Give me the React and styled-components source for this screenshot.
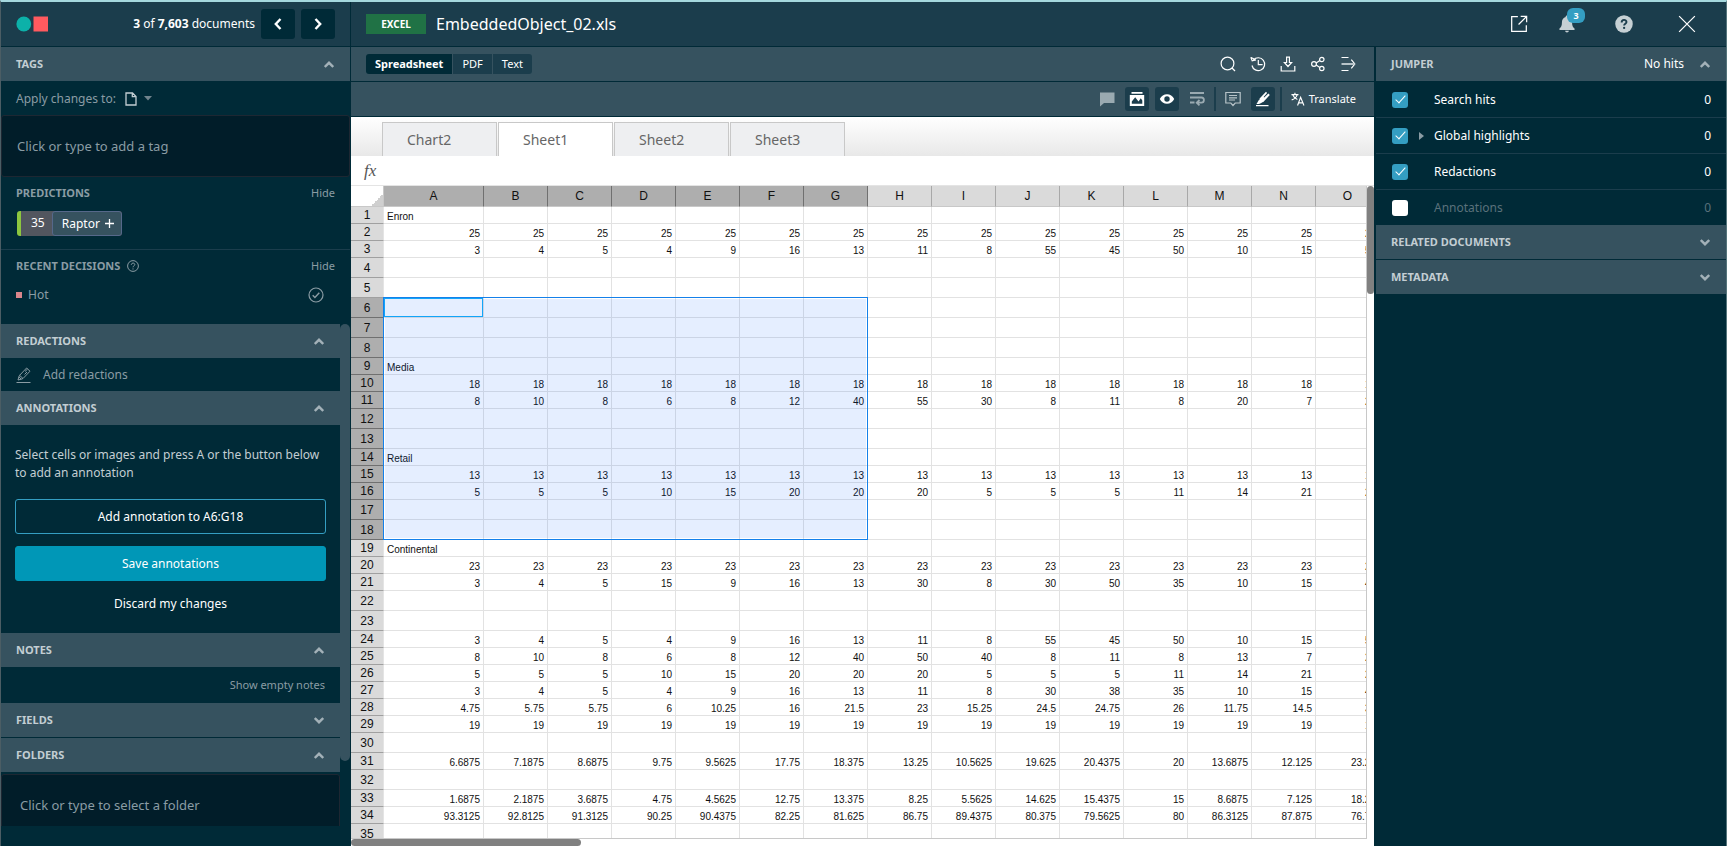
import React, { useState } from 'react';
import styled, { createGlobalStyle } from 'styled-components';

const colors = {
  dark: '#002a37',
  darker: '#011d29',
  header: '#1b3d4c',
  bar: '#36525f',
  muted: '#8a9ca4',
  label: '#c3ced3',
  blue: '#349ec2',
};

const GlobalStyle = createGlobalStyle`
  *, *::before, *::after {
    box-sizing: border-box;
  }
  body {
    margin: 0;
    font-family: 'Noto Sans', 'Open Sans', sans-serif;
    font-size: 12px;
    line-height: 18px;
    color: #fff;
    background: ${colors.dark};
  }
  button, input {
    font: inherit;
    color: inherit;
  }
  svg {
    display: block;
    flex: none;
  }
`;

const Page = styled.div`
  display: flex;
  height: 100vh;
  overflow: hidden;
  border-top: 2px solid #a5d8de;
  border-left: 1px solid #4b5d64;
  border-right: 1px solid #55757c;
  background: ${colors.dark};
`;

/* ---------- shared parts ---------- */

const PlainButton = styled.button`
  display: flex;
  align-items: center;
  justify-content: center;
  padding: 0;
  border: 0;
  background: none;
  color: ${(p) => p.$color || '#fff'};
  cursor: pointer;
`;

const SectionBar = styled.button`
  display: flex;
  align-items: center;
  gap: 16px;
  width: 100%;
  height: ${(p) => (p.$divided ? '35px' : '34px')};
  padding: 0 16px 0 15px;
  border: 0;
  border-bottom: ${(p) => (p.$divided ? `1px solid ${colors.dark}` : '0')};
  background: ${colors.bar};
  color: ${colors.label};
  text-align: left;
  cursor: pointer;
  flex: none;
`;

const SectionTitle = styled.span`
  flex: 1;
  font-size: 11px;
  font-weight: 700;
`;

const SectionNote = styled.span`
  color: #fff;
`;

/* ---------- left panel ---------- */

const LeftPanel = styled.aside`
  display: flex;
  flex-direction: column;
  width: 350px;
  flex: none;
  border-right: 1px solid ${colors.dark};
`;

const LeftHeader = styled.header`
  display: flex;
  align-items: center;
  gap: 6px;
  height: 45px;
  padding: 0 15px;
  background: ${colors.header};
  border-bottom: 1px solid ${colors.dark};
  flex: none;
`;

const Position = styled.span`
  margin-left: auto;
`;

const NavButton = styled(PlainButton)`
  width: 34px;
  height: 30px;
  border-radius: 3px;
  background: ${colors.dark};
`;

const ApplyRow = styled.div`
  display: flex;
  align-items: center;
  gap: 9px;
  height: 33px;
  padding: 0 15px;
  color: ${colors.muted};
  flex: none;
`;

const ApplyButton = styled(PlainButton)`
  gap: 7px;
`;

const PickerInput = styled.input`
  display: block;
  width: 100%;
  height: 62px;
  padding: 0 ${(p) => (p.$indented ? '18px' : '15px')};
  border: 1px solid #1d2732;
  border-radius: 3px;
  background: ${colors.darker};
  font-size: 13px;
  flex: none;

  &::placeholder {
    color: ${colors.muted};
    opacity: 1;
  }
`;

const SubSection = styled.section`
  padding: 7px 15px 0;
  height: ${(p) => p.$height};
  border-bottom: ${(p) => (p.$line ? `1px solid ${colors.header}` : '0')};
  flex: none;
`;

const SubHeader = styled.div`
  display: flex;
  align-items: center;
  gap: 7px;
  color: ${colors.muted};
`;

const SubTitle = styled.h2`
  margin: 0;
  font-size: 11px;
  line-height: 18px;
  font-weight: 700;
`;

const TextButton = styled(PlainButton)`
  margin-left: auto;
  font-size: 11px;
`;

const Prediction = styled.div`
  display: inline-flex;
  margin: 9px 0 0 1px;
  height: 25px;
  border-left: 4px solid #8cc63f;
  border-radius: 3px;
  overflow: hidden;
  background: #52565f;
`;

const Score = styled.span`
  padding: 3px 7px 0 10px;
`;

const PredictionTag = styled(PlainButton)`
  gap: 5px;
  padding: 0 7px 0 9px;
  border: 1px solid #56688a;
  border-radius: 3px;
  background: ${colors.bar};
`;

const Decision = styled.div`
  display: flex;
  align-items: center;
  gap: 6px;
  padding: 11px 11px 0 0;
  color: ${colors.muted};
`;

const Swatch = styled.span`
  width: 6px;
  height: 6px;
  background: #d9868c;
`;

const DecisionName = styled.span`
  flex: 1;
`;

const ScrollArea = styled.div`
  display: flex;
  flex: 1;
  min-height: 0;
  margin-bottom: 20px;
`;

const ScrollContent = styled.div`
  display: flex;
  flex-direction: column;
  flex: 1;
  min-width: 0;
  overflow: hidden;
`;

const ScrollTrack = styled.div`
  width: 10px;
  flex: none;
`;

const ScrollThumb = styled.div`
  height: 87%;
  border-radius: 5px;
  background: ${colors.bar};
`;

const AddRedactions = styled(PlainButton)`
  justify-content: flex-start;
  gap: 11px;
  height: 33px;
  padding: 0 15px;
  flex: none;
`;

const AnnotationBody = styled.div`
  display: flex;
  flex-direction: column;
  height: 208px;
  padding: 21px 14px 0;
  flex: none;
`;

const HelpText = styled.p`
  margin: 0 0 17px;
  color: ${colors.label};
`;

const WideButton = styled.button`
  height: 36px;
  margin-bottom: ${(p) => (p.$primary ? '5px' : '12px')};
  border-radius: 3px;
  border: 1px solid ${(p) => (p.$primary ? '#0097b7' : p.$outline ? colors.blue : 'transparent')};
  background: ${(p) => (p.$primary ? '#0097b7' : 'transparent')};
  cursor: pointer;
`;

const NotesRow = styled.div`
  display: flex;
  align-items: center;
  height: 36px;
  padding: 0 15px;
  flex: none;
`;

const FolderSlot = styled.div`
  padding-top: 2px;
  flex: none;
`;

/* ---------- main area ---------- */

const Main = styled.div`
  display: flex;
  flex-direction: column;
  flex: 1;
  min-width: 0;
`;

const TopBar = styled.header`
  display: flex;
  align-items: center;
  gap: 10px;
  height: 45px;
  padding: 0 6px 0 15px;
  background: ${colors.header};
  border-bottom: 1px solid ${colors.dark};
  flex: none;
`;

const FileType = styled.span`
  width: 60px;
  height: 20px;
  line-height: 20px;
  background: #207245;
  font-size: 10px;
  font-weight: 700;
  text-align: center;
`;

const FileName = styled.h1`
  flex: 1;
  margin: 0;
  font-size: 16px;
  line-height: 24px;
  font-weight: 400;
`;

const TopActions = styled.div`
  display: grid;
  grid-template-columns: 42px 54px 60px 66px;
  align-items: center;
`;

const BellButton = styled(PlainButton)`
  position: relative;
`;

const Badge = styled.span`
  position: absolute;
  left: 50%;
  top: -7px;
  width: 18px;
  height: 15px;
  border-radius: 6px;
  background: ${colors.blue};
  color: #fff;
  font-size: 9px;
  line-height: 15px;
  font-weight: 700;
`;

const Body = styled.div`
  display: flex;
  flex: 1;
  min-height: 0;
`;

const Viewer = styled.main`
  display: flex;
  flex-direction: column;
  flex: 1;
  min-width: 0;
  border-right: 2px solid ${colors.dark};
`;

const Toolbar = styled.div`
  display: flex;
  align-items: center;
  gap: ${(p) => p.$gap};
  height: 35px;
  padding: 0 18px 0 15px;
  background: ${colors.bar};
  border-bottom: 1px solid ${colors.dark};
  flex: none;
`;

const Segments = styled.div`
  display: flex;
  gap: 1px;
  margin-right: auto;
  border-radius: 3px;
  overflow: hidden;
`;

const Segment = styled(PlainButton)`
  height: 20px;
  padding: 0 9px;
  background: ${(p) => (p.$active ? colors.dark : colors.header)};
  font-size: 11px;
  font-weight: ${(p) => (p.$active ? 700 : 400)};
`;

const ToolButton = styled(PlainButton)`
  width: 24px;
  height: 24px;
  border-radius: 3px;
  background: ${(p) => (p.$active ? colors.header : 'transparent')};
`;

const ToolDivider = styled.span`
  width: 2px;
  height: 24px;
  margin: 0 -1px;
  background: ${colors.header};
`;

const TranslateButton = styled(PlainButton)`
  gap: 4px;
  margin-left: 4px;
  font-size: 11px;
`;

const Spacer = styled.span`
  flex: 1;
`;

/* ---------- spreadsheet ---------- */

const SheetArea = styled.div`
  display: flex;
  flex-direction: column;
  flex: 1;
  min-height: 0;
  background: #fff;
`;

const SheetTabs = styled.div`
  display: flex;
  align-items: flex-end;
  gap: 1px;
  height: 39px;
  padding-left: 31px;
  background: linear-gradient(#fff, #e8e8e8);
  flex: none;
`;

const SheetTab = styled.button`
  width: 115px;
  height: 34px;
  padding: 0 0 0 24px;
  border: 1px solid #c8c8c8;
  border-bottom: 0;
  background: ${(p) => (p.$active ? '#fff' : '#eeeff1')};
  color: #666;
  font-size: 14px;
  text-align: left;
`;

const FormulaBar = styled.label`
  display: flex;
  align-items: center;
  height: 30px;
  padding-left: 13px;
  border-bottom: 1px solid #e4e4e4;
  color: #555;
  font-family: 'Liberation Serif', serif;
  font-size: 17px;
  font-style: italic;
  flex: none;
`;

const FormulaInput = styled.input`
  flex: 1;
  height: 22px;
  margin-left: 8px;
  border: 0;
  outline: 0;
  background: transparent;
  color: #222;
`;

const GridRow = styled.div`
  display: flex;
  flex: 1;
  min-height: 0;
`;

const GridView = styled.div`
  position: relative;
  flex: 1;
  min-width: 0;
  overflow: hidden;
  border-right: 1px solid #c8c8c8;
  border-bottom: 1px solid #c8c8c8;
`;

const VScroll = styled.div`
  width: 7px;
  flex: none;
`;

const VThumb = styled.div`
  height: 108px;
  border-radius: 4px;
  background: #808080;
`;

const HScroll = styled.div`
  height: 7px;
  flex: none;
`;

const HThumb = styled.div`
  width: 230px;
  height: 7px;
  border-radius: 4px;
  background: #808080;
`;

const Grid = styled.table`
  table-layout: fixed;
  width: 1029px;
  border-collapse: separate;
  border-spacing: 0;
  font-family: 'Liberation Sans', Arial, sans-serif;
  color: #111;

  th, td {
    padding: 0;
    overflow: hidden;
    white-space: nowrap;
  }
`;

const GutterCol = styled.col`
  width: 33px;
`;

const FirstCol = styled.col`
  width: 100px;
`;

const DataCol = styled.col`
  width: 64px;
`;

const Corner = styled.th`
  height: 21px;
  border-right: 1px solid #c8c8c8;
  border-bottom: 1px solid #c8c8c8;
  background: linear-gradient(135deg, transparent 50%, #cfcfcf 50%) right bottom / 12px 12px no-repeat;
`;

const ColumnHead = styled.th`
  height: 21px;
  border-right: 1px solid ${(p) => (p.$selected ? '#707070' : '#a8a8a8')};
  border-bottom: 1px solid #c8c8c8;
  background: ${(p) => (p.$selected ? '#aeaeae' : '#dadada')};
  font-size: 12px;
  line-height: 18px;
  font-weight: 400;
`;

const RowHead = styled.th`
  border-right: 1px solid #e4e4e4;
  border-bottom: 1px solid ${(p) => (p.$selected ? '#707070' : '#a0a0a0')};
  background: ${(p) => (p.$selected ? '#aeaeae' : '#dadada')};
  font-size: 12px;
  line-height: 16px;
  font-weight: 400;
`;

const Cell = styled.td`
  height: ${(p) => p.$height}px;
  border-right: 1px solid #e2e2e2;
  border-bottom: 1px solid #e2e2e2;
  font-size: 10px;
  line-height: 12px;
  vertical-align: bottom;
  text-align: ${(p) => (p.$text ? 'left' : 'right')};

  && {
    padding: 0 3px;
  }
`;

const Selection = styled.div`
  position: absolute;
  padding: 1px;
  border: 1px solid #1480ea;
  background: rgba(0, 90, 255, 0.1) content-box;
  pointer-events: none;
`;

const ActiveCell = styled.div`
  position: absolute;
  left: 0;
  top: 0;
  width: 99px;
  height: 19px;
  border: 1px solid #12a5f8;
`;

/* ---------- right panel ---------- */

const RightPanel = styled.aside`
  width: 350px;
  flex: none;
`;

const HitRow = styled.div`
  display: flex;
  align-items: center;
  height: 36px;
  padding: 0 15px;
  border-bottom: 1px solid ${colors.header};
  color: ${(p) => (p.$dim ? '#5a717b' : '#fff')};

  &:last-of-type {
    height: 35px;
    border-bottom: 0;
  }
`;

const HitLabel = styled.label`
  display: flex;
  align-items: center;
  flex: 1;
`;

const CheckBox = styled.input`
  appearance: none;
  display: grid;
  place-content: center;
  width: 16px;
  height: 16px;
  margin: 0 11px 0 1px;
  border-radius: 3px;
  background: #fff;

  &:checked {
    background: ${colors.blue};
  }
  &:checked::before {
    content: '';
    width: 5px;
    height: 10px;
    margin-top: -3px;
    border: solid #fff;
    border-width: 0 1px 1px 0;
    transform: rotate(42deg);
  }
`;

const Expander = styled.span`
  width: 15px;
`;

const Triangle = styled.span`
  display: block;
  width: 0;
  border: solid transparent;
  border-width: 4px 0 4px 5px;
  border-left-color: ${colors.muted};
`;

/* ---------- icons ---------- */

const Svg = ({ size = 16, children, ...rest }) => (
  <svg width={size} height={size} viewBox="0 0 16 16" fill="none" stroke="currentColor" aria-hidden="true" {...rest}>
    {children}
  </svg>
);

const Chevron = ({ up }) => (
  <svg width="10" height="7" viewBox="0 0 10 7" fill="none" stroke="#a3b1b8" strokeWidth="2.4" aria-hidden="true">
    <path d={up ? 'M0.8 6 5 1.8 9.2 6' : 'M0.8 1 5 5.2 9.2 1'} />
  </svg>
);

const Arrow = ({ left }) => (
  <svg width="8" height="12" viewBox="0 0 8 12" fill="none" stroke="#fff" strokeWidth="2.4" aria-hidden="true">
    <path d={left ? 'M6.5 1 1.8 6l4.7 5' : 'M1.5 1l4.7 5-4.7 5'} />
  </svg>
);

const Logo = () => (
  <svg width="33" height="16" viewBox="0 0 33 16" aria-hidden="true">
    <circle cx="7.8" cy="8" r="7.4" fill="#0cb1a9" />
    <rect x="17.5" y="0.5" width="14.5" height="15" fill="#ff5a5f" />
  </svg>
);

const FileIcon = () => (
  <svg width="12" height="14" viewBox="0 0 12 14" fill="none" stroke="#c3ced3" strokeWidth="1.3" aria-hidden="true">
    <path d="M1 1h6.5L11 4.5V13H1zM7.3 1v3.7H11" />
  </svg>
);

const Caret = () => (
  <svg width="8" height="5" viewBox="0 0 8 5" fill="#71848d" aria-hidden="true">
    <path d="M0 0h8L4 4.6z" />
  </svg>
);

const Plus = () => (
  <svg width="9" height="9" viewBox="0 0 9 9" stroke="#fff" strokeWidth="1.3" aria-hidden="true">
    <path d="M4.5 0v9M0 4.5h9" />
  </svg>
);

const QuestionIcon = () => (
  <svg width="12" height="12" viewBox="0 0 12 12" fill="none" stroke="#8a9ca4" aria-hidden="true">
    <circle cx="6" cy="6" r="5.4" />
    <path d="M4.3 4.8c0-2.3 3.5-2.2 3.5-.2C7.8 5.8 6 5.8 6 7.3M6 8.4v1.1" />
  </svg>
);

const CheckCircle = () => (
  <Svg stroke="#8a9ca4">
    <circle cx="8" cy="8" r="7" strokeWidth="1.2" />
    <path d="M4.7 8.2l2.2 2.3 4.4-4.8" strokeWidth="1.4" />
  </Svg>
);

const PenIcon = () => (
  <Svg stroke="#8a9ca4">
    <path d="M0.5 15.5h14M3.6 8.3 10.6 1l3.4 3.2-7 7.3zM3.6 8.3l-.7 1.5L2 13l3.2-.8L7 11.5M2.9 9.8l2.3 2.4M9 4.5l2.5-2.4M11 5l-2.4 2.4" />
  </Svg>
);

const OpenIcon = () => (
  <Svg size={18} strokeWidth="1.1">
    <path d="M7 1.5H1.500v13h13V9M9.500 1.200h5.300v5.300M14.600 1.400 7.600 8.400" />
  </Svg>
);

const BellIcon = () => (
  <Svg size={18} fill="#c6d0d4" stroke="none">
    <path d="M8 .5c.8 0 1.2.5 1.2 1.2 2.2.6 3.3 2.4 3.3 4.8 0 3.2.7 4.6 2.2 5.5v1.3H1.3V12c1.5-.9 2.2-2.3 2.2-5.5 0-2.4 1.1-4.2 3.3-4.8C6.8 1 7.2.5 8 .5zM6.3 14h3.4c-.2 1-.8 1.5-1.7 1.5s-1.5-.5-1.7-1.5z" />
  </Svg>
);

const HelpIcon = () => (
  <Svg size={18} stroke="none">
    <circle cx="8" cy="8" r="7.8" fill="#c6d0d4" />
    <path d="M5.9 6.6c0-3 4.3-2.9 4.3-.4 0 1.5-2.1 1.6-2.1 3.2" stroke="#1b3d4c" strokeWidth="1.7" />
    <circle cx="8.1" cy="11.5" r="1" fill="#1b3d4c" />
  </Svg>
);

const CloseIcon = () => (
  <Svg size={18} strokeWidth="1.1">
    <path d="M1 1l14 14M15 1 1 15" />
  </Svg>
);

const SearchIcon = () => (
  <Svg strokeWidth="1.2">
    <circle cx="7.5" cy="7.5" r="6.4" />
    <path d="M12 12l3 3" />
  </Svg>
);

const HistoryIcon = () => (
  <Svg strokeWidth="1.2">
    <path d="M3.4 4A6.4 6.4 0 1 1 2 9.500M8.300 4v4.700h4.300M.8 1.300l1.400 3.600 3.800-1M1 1.500l4.800 2.300" />
  </Svg>
);

const DownloadIcon = () => (
  <Svg strokeWidth="1.2">
    <path d="M1.200 10v5h13.600v-5M6.600 1.200h2.800v5.300h2.200L8 10.500 4.400 6.500h2.200z" />
  </Svg>
);

const ShareIcon = () => (
  <Svg strokeWidth="1.2">
    <circle cx="4" cy="8" r="2.400" />
    <circle cx="11.800" cy="3.500" r="2.200" />
    <circle cx="11.800" cy="12.500" r="2.200" />
    <path d="M6.200 6.900l3.600-2.300M6.200 9.100l3.600 2.300" />
  </Svg>
);

const ExpandIcon = () => (
  <Svg strokeWidth="1.2">
    <path d="M1.500 1.500h7M1.500 14.500h7M11.300 3.600 14.800 8l-3.500 4.400" />
    <path d="M1.500 8h13" stroke="#b7c3c8" strokeWidth="2" />
  </Svg>
);

const CommentIcon = () => (
  <Svg fill="#9aaab1" stroke="none">
    <path d="M1 1.500h14.500v10.500H5L1 15.500z" />
  </Svg>
);

const ImageIcon = () => (
  <Svg fill="#fff" stroke="none">
    <path fillRule="evenodd" d="M2.500 1h11v1.800h-11zM.8 4h14.400v11H.8zM2.800 12.800h10.500V9.500l-1.500-2.200-2.300 3.200-3.300-4.200-3.400 4.200z" />
  </Svg>
);

const EyeIcon = () => (
  <Svg fill="#fff" stroke="none">
    <path fillRule="evenodd" d="M.8 8C3.500 1.700 12.500 1.700 15.200 8 12.500 14.300 3.500 14.300.8 8zM8 5.300a2.700 2.700 0 1 0 0 5.400 2.700 2.700 0 0 0 0-5.400z" />
  </Svg>
);

const WrapIcon = () => (
  <Svg stroke="#9aaab1" strokeWidth="1.8">
    <path d="M1 2h14M1 6.500h11.500c3.200 0 3.200 5.200 0 5.200H9M1 11.500h4.500M10.500 9l-2.800 2.700 2.800 2.700" />
  </Svg>
);

const NoteIcon = () => (
  <Svg stroke="#b7c3c8" strokeWidth="1.2">
    <path d="M.8 1.500h14.400v10.500h-5L8 14.500 5.800 12h-5zM4 4.500h8M4 6.800h8M4 9h6" />
  </Svg>
);

const MarkerIcon = () => (
  <Svg fill="#fff" stroke="none">
    <path d="M1 14h12.500v1.200H1zM4.600 7.500 11 .8l1.100 1.100-3.500 4 .6.6 4.200-4 1.400 1.500-6.500 7-1.800.4-2.100-2.100zM1.500 13l2.500-4.200 2.900 2.900L4 13z" />
  </Svg>
);

const TranslateIcon = () => (
  <Svg size={14} strokeWidth="1.3">
    <path d="M.5 3h8M4.500.8V3M2 3.200c1 2.800 3 4.500 5.300 5.300M7 3.200C6.200 6 4 8 .8 9M7.500 15.500 11 6l3.800 9.500M8.700 12.500h4.600" />
  </Svg>
);

/* ---------- data ---------- */

const columns = 'ABCDEFGHIJKLMNO'.split('');
const fill = (value) => columns.map(() => value);

// Rows that hold values; every other row is an empty, taller one
const sheet = {
  1: ['Enron'],
  2: fill('25'),
  3: ['3', '4', '5', '4', '9', '16', '13', '11', '8', '55', '45', '50', '10', '15', '55'],
  9: ['Media'],
  10: fill('18'),
  11: ['8', '10', '8', '6', '8', '12', '40', '55', '30', '8', '11', '8', '20', '7', '20'],
  14: ['Retail'],
  15: fill('13'),
  16: ['5', '5', '5', '10', '15', '20', '20', '20', '5', '5', '5', '11', '14', '21', '20'],
  19: ['Continental'],
  20: fill('23'),
  21: ['3', '4', '5', '15', '9', '16', '13', '30', '8', '30', '50', '35', '10', '15', '40'],
  24: ['3', '4', '5', '4', '9', '16', '13', '11', '8', '55', '45', '50', '10', '15', '55'],
  25: ['8', '10', '8', '6', '8', '12', '40', '50', '40', '8', '11', '8', '13', '7', '20'],
  26: ['5', '5', '5', '10', '15', '20', '20', '20', '5', '5', '5', '11', '14', '21', '20'],
  27: ['3', '4', '5', '4', '9', '16', '13', '11', '8', '30', '38', '35', '10', '15', '40'],
  28: ['4.75', '5.75', '5.75', '6', '10.25', '16', '21.5', '23', '15.25', '24.5', '24.75', '26', '11.75', '14.5', '30'],
  29: fill('19'),
  31: ['6.6875', '7.1875', '8.6875', '9.75', '9.5625', '17.75', '18.375', '13.25', '10.5625', '19.625', '20.4375', '20', '13.6875', '12.125', '23.25'],
  33: ['1.6875', '2.1875', '3.6875', '4.75', '4.5625', '12.75', '13.375', '8.25', '5.5625', '14.625', '15.4375', '15', '8.6875', '7.125', '18.25'],
  34: ['93.3125', '92.8125', '91.3125', '90.25', '90.4375', '82.25', '81.625', '86.75', '89.4375', '80.375', '79.5625', '80', '86.3125', '87.875', '76.75'],
};

const ROW_COUNT = 35;
const HEAD_HEIGHT = 21;
const GUTTER_WIDTH = 33;
const rowNumbers = Array.from({ length: ROW_COUNT }, (_, i) => i + 1);
const rowHeight = (row) => (sheet[row] ? 17 : 20);
const columnWidth = (index) => (index === 0 ? 100 : 64);

const selected = { firstRow: 6, lastRow: 18, lastColumn: 6 };

const selectionBox = ({ firstRow, lastRow, lastColumn }) => {
  let top = HEAD_HEIGHT;
  let height = 0;
  let width = 0;
  rowNumbers.forEach((row) => {
    if (row < firstRow) top += rowHeight(row);
    else if (row <= lastRow) height += rowHeight(row);
  });
  for (let i = 0; i <= lastColumn; i++) width += columnWidth(i);
  // The outline sits on the grid lines, so it starts one pixel earlier
  return { top: top - 1, left: GUTTER_WIDTH - 1, width: width + 1, height: height + 1 };
};

const hits = [
  { id: 'search', label: 'Search hits', checked: true },
  { id: 'global', label: 'Global highlights', checked: true, expandable: true },
  { id: 'redactions', label: 'Redactions', checked: true },
  { id: 'annotations', label: 'Annotations', checked: false, dim: true },
];

/* ---------- components ---------- */

const Section = ({ title, note, open, divided }) => (
  <SectionBar $divided={divided} aria-expanded={!!open}>
    <SectionTitle>{title}</SectionTitle>
    {note && <SectionNote>{note}</SectionNote>}
    <Chevron up={open} />
  </SectionBar>
);

const DocumentPanel = () => (
  <LeftPanel>
    <LeftHeader>
      <Logo />
      <Position>
        <b>3</b> of <b>7,603</b> documents
      </Position>
      <NavButton aria-label="Previous document"><Arrow left /></NavButton>
      <NavButton aria-label="Next document"><Arrow /></NavButton>
    </LeftHeader>
    <Section title="TAGS" open divided />
    <ApplyRow>
      Apply changes to:
      <ApplyButton aria-label="Choose documents"><FileIcon /><Caret /></ApplyButton>
    </ApplyRow>
    <PickerInput aria-label="Tag" placeholder="Click or type to add a tag" />
    <SubSection $height="73px" $line>
      <SubHeader>
        <SubTitle>PREDICTIONS</SubTitle>
        <TextButton $color={colors.muted}>Hide</TextButton>
      </SubHeader>
      <Prediction>
        <Score>35</Score>
        <PredictionTag>Raptor <Plus /></PredictionTag>
      </Prediction>
    </SubSection>
    <SubSection $height="74px">
      <SubHeader>
        <SubTitle>RECENT DECISIONS</SubTitle>
        <QuestionIcon />
        <TextButton $color={colors.muted}>Hide</TextButton>
      </SubHeader>
      <Decision>
        <Swatch />
        <DecisionName>Hot</DecisionName>
        <CheckCircle />
      </Decision>
    </SubSection>
    <ScrollArea>
      <ScrollContent>
        <Section title="REDACTIONS" open />
        <AddRedactions $color={colors.muted}><PenIcon />Add redactions</AddRedactions>
        <Section title="ANNOTATIONS" open />
        <AnnotationBody>
          <HelpText>Select cells or images and press A or the button below to add an annotation</HelpText>
          <WideButton $outline>Add annotation to A6:G18</WideButton>
          <WideButton $primary>Save annotations</WideButton>
          <WideButton>Discard my changes</WideButton>
        </AnnotationBody>
        <Section title="NOTES" open />
        <NotesRow>
          <TextButton $color={colors.muted}>Show empty notes</TextButton>
        </NotesRow>
        <Section title="FIELDS" divided />
        <Section title="FOLDERS" open />
        <FolderSlot>
          <PickerInput $indented aria-label="Folder" placeholder="Click or type to select a folder" />
        </FolderSlot>
      </ScrollContent>
      <ScrollTrack><ScrollThumb /></ScrollTrack>
    </ScrollArea>
  </LeftPanel>
);

const SpreadsheetGrid = () => (
  <GridView>
    <Grid>
      <colgroup>
        <GutterCol />
        {columns.map((name, i) => (i === 0 ? <FirstCol key={name} /> : <DataCol key={name} />))}
      </colgroup>
      <thead>
        <tr>
          <Corner />
          {columns.map((name, i) => (
            <ColumnHead key={name} scope="col" $selected={i <= selected.lastColumn}>{name}</ColumnHead>
          ))}
        </tr>
      </thead>
      <tbody>
        {rowNumbers.map((row) => (
          <tr key={row}>
            <RowHead scope="row" $selected={row >= selected.firstRow && row <= selected.lastRow}>{row}</RowHead>
            {columns.map((name, i) => {
              const value = sheet[row] ? sheet[row][i] : '';
              return (
                <Cell key={name} $height={rowHeight(row)} $text={isNaN(value)}>{value}</Cell>
              );
            })}
          </tr>
        ))}
      </tbody>
    </Grid>
    <Selection style={selectionBox(selected)}>
      <ActiveCell />
    </Selection>
  </GridView>
);

const Spreadsheet = () => {
  const [sheetName, setSheetName] = useState('Sheet1');

  return (
    <SheetArea>
      <SheetTabs>
        {['Chart2', 'Sheet1', 'Sheet2', 'Sheet3'].map((name) => (
          <SheetTab key={name} $active={name === sheetName} onClick={() => setSheetName(name)}>{name}</SheetTab>
        ))}
      </SheetTabs>
      <FormulaBar>
        fx
        <FormulaInput />
      </FormulaBar>
      <GridRow>
        <SpreadsheetGrid />
        <VScroll><VThumb /></VScroll>
      </GridRow>
      <HScroll><HThumb /></HScroll>
    </SheetArea>
  );
};

const Jumper = () => (
  <RightPanel>
    <Section title="JUMPER" note="No hits" open divided />
    {hits.map((hit) => (
      <HitRow key={hit.id} $dim={hit.dim}>
        <HitLabel>
          <CheckBox type="checkbox" defaultChecked={hit.checked} />
          <Expander>{hit.expandable && <Triangle />}</Expander>
          {hit.label}
        </HitLabel>
        <span>0</span>
      </HitRow>
    ))}
    <Section title="RELATED DOCUMENTS" divided />
    <Section title="METADATA" />
  </RightPanel>
);

export default function App() {
  const [view, setView] = useState('Spreadsheet');

  return (
    <Page>
      <GlobalStyle />
      <DocumentPanel />
      <Main>
        <TopBar>
          <FileType>EXCEL</FileType>
          <FileName>EmbeddedObject_02.xls</FileName>
          <TopActions>
            <PlainButton aria-label="Open in new window"><OpenIcon /></PlainButton>
            <BellButton aria-label="Notifications"><BellIcon /><Badge>3</Badge></BellButton>
            <PlainButton aria-label="Help"><HelpIcon /></PlainButton>
            <PlainButton aria-label="Close"><CloseIcon /></PlainButton>
          </TopActions>
        </TopBar>
        <Body>
          <Viewer>
            <Toolbar $gap="14px">
              <Segments>
                {['Spreadsheet', 'PDF', 'Text'].map((name) => (
                  <Segment key={name} $active={name === view} onClick={() => setView(name)}>{name}</Segment>
                ))}
              </Segments>
              <PlainButton aria-label="Search"><SearchIcon /></PlainButton>
              <PlainButton aria-label="History"><HistoryIcon /></PlainButton>
              <PlainButton aria-label="Download"><DownloadIcon /></PlainButton>
              <PlainButton aria-label="Share"><ShareIcon /></PlainButton>
              <PlainButton aria-label="Next panel"><ExpandIcon /></PlainButton>
            </Toolbar>
            <Toolbar $gap="6px">
              <Spacer />
              <ToolButton aria-label="Comments"><CommentIcon /></ToolButton>
              <ToolButton $active aria-label="Images"><ImageIcon /></ToolButton>
              <ToolButton $active aria-label="Show hidden"><EyeIcon /></ToolButton>
              <ToolButton aria-label="Wrap text"><WrapIcon /></ToolButton>
              <ToolDivider />
              <ToolButton aria-label="Notes"><NoteIcon /></ToolButton>
              <ToolButton $active aria-label="Highlight"><MarkerIcon /></ToolButton>
              <ToolDivider />
              <TranslateButton><TranslateIcon />Translate</TranslateButton>
            </Toolbar>
            <Spreadsheet />
          </Viewer>
          <Jumper />
        </Body>
      </Main>
    </Page>
  );
}
